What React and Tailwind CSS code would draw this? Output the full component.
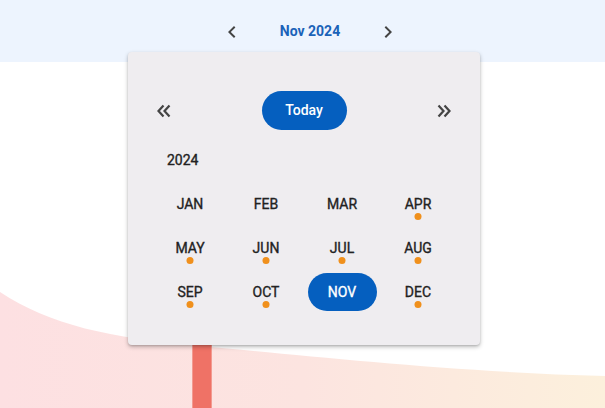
import React from "react";

const months = ["JAN","FEB","MAR","APR","MAY","JUN","JUL","AUG","SEP","OCT","NOV","DEC"];
const dots = new Set(["APR","MAY","JUN","JUL","AUG","SEP","OCT","DEC"]);

function Chevron({ dir = "left" }) {
  return (
    <svg width="24" height="24" viewBox="0 0 24 24" className="text-[#444]">
      {dir === "left" ? (
        <path d="M15.4 7.4 14 6l-6 6 6 6 1.4-1.4L10.8 12z" fill="currentColor" />
      ) : (
        <path d="M8.6 16.6 10 18l6-6-6-6-1.4 1.4 4.6 4.6z" fill="currentColor" />
      )}
    </svg>
  );
}

function DoubleChevron({ dir = "left" }) {
  return (
    <svg width="18" height="16" viewBox="0 0 18 16" className="text-[#444]">
      <g fill="none" stroke="currentColor" strokeWidth="2.2" strokeLinecap="butt" strokeLinejoin="miter"
         transform={dir === "left" ? "" : "translate(18 0) scale(-1 1)"}>
        <polyline points="8.5,2.5 3.5,8 8.5,13.5" />
        <polyline points="14.5,2.5 9.5,8 14.5,13.5" />
      </g>
    </svg>
  );
}

const stroke = "[-webkit-text-stroke:0.35px_currentColor]";

export default function App() {
  return (
    <div className="relative w-[605px] h-[408px] overflow-hidden bg-white" style={{ fontFamily: "Roboto, 'Liberation Sans', sans-serif" }}>
      <svg className="absolute inset-0" width="605" height="408" viewBox="0 0 605 408">
        <defs>
          <linearGradient id="g" x1="0" y1="0" x2="1" y2="0">
            <stop offset="0" stopColor="#fde0e2" />
            <stop offset="0.5" stopColor="#fce4e0" />
            <stop offset="1" stopColor="#fcf0dc" />
          </linearGradient>
        </defs>
        <path d="M0,292 C50,325 110,338 200,346 C300,355 450,372 605,376 L605,408 L0,408 Z" fill="url(#g)" />
        <rect x="192" y="330" width="20" height="80" fill="#ef7266" />
        <rect x="192" y="330" width="1" height="80" fill="#f39a90" />
        <rect x="211" y="330" width="1" height="80" fill="#f39a90" />
      </svg>

      <div className="relative h-[62px] bg-[#edf4fe] flex items-start justify-center pt-[20px] pl-[15px]">
        <div className="flex items-center h-[24px]">
          <button className="w-[24px] h-[24px] flex items-center justify-center">
            <Chevron dir="left" />
          </button>
          <div className="w-[132px] text-center text-[14px] font-bold text-[#1a62b8] leading-[18px] -mt-[3px]">Nov 2024</div>
          <button className="w-[24px] h-[24px] flex items-center justify-center">
            <Chevron dir="right" />
          </button>
        </div>
      </div>

      <div className="absolute left-[128px] top-[52px] w-[352px] bg-[#efedf0] rounded-[4px] shadow-[0_2px_4px_rgba(0,0,0,0.25),0_1px_2px_rgba(0,0,0,0.12)] pt-[39px] pb-[34px]">
        <div className="flex items-center justify-between px-[27px] h-[39px]">
          <button className="w-[18px] h-[16px] flex items-center justify-center">
            <DoubleChevron dir="left" />
          </button>
          <button className="w-[85px] h-[39px] rounded-full bg-[#055fbf] text-white text-[14px] font-medium">Today</button>
          <button className="w-[18px] h-[16px] flex items-center justify-center">
            <DoubleChevron dir="right" />
          </button>
        </div>
        <div className="mt-[20px] h-[20px] leading-[20px] pl-[39px] text-[14px] font-normal text-[#222] [-webkit-text-stroke:0.35px_currentColor]">2024</div>
        <div className="mt-[15px] px-[24px] grid grid-cols-4 gap-y-[6px]">
          {months.map((m) => (
            <div key={m} className="relative h-[38px] flex items-center justify-center">
              {m === "NOV" ? (
                <div className="w-[69px] h-[38px] rounded-full bg-[#055fbf] text-white text-[14px] font-normal flex items-center justify-center [-webkit-text-stroke:0.35px_currentColor]">NOV</div>
              ) : (
                <span className="text-[14px] font-normal text-[#222] [-webkit-text-stroke:0.35px_currentColor]">{m}</span>
              )}
              {dots.has(m) && (
                <span className="absolute left-1/2 -translate-x-1/2 top-[28px] w-[7px] h-[7px] rounded-full bg-[#f0901c]" />
              )}
            </div>
          ))}
        </div>
      </div>
    </div>
  );
}
